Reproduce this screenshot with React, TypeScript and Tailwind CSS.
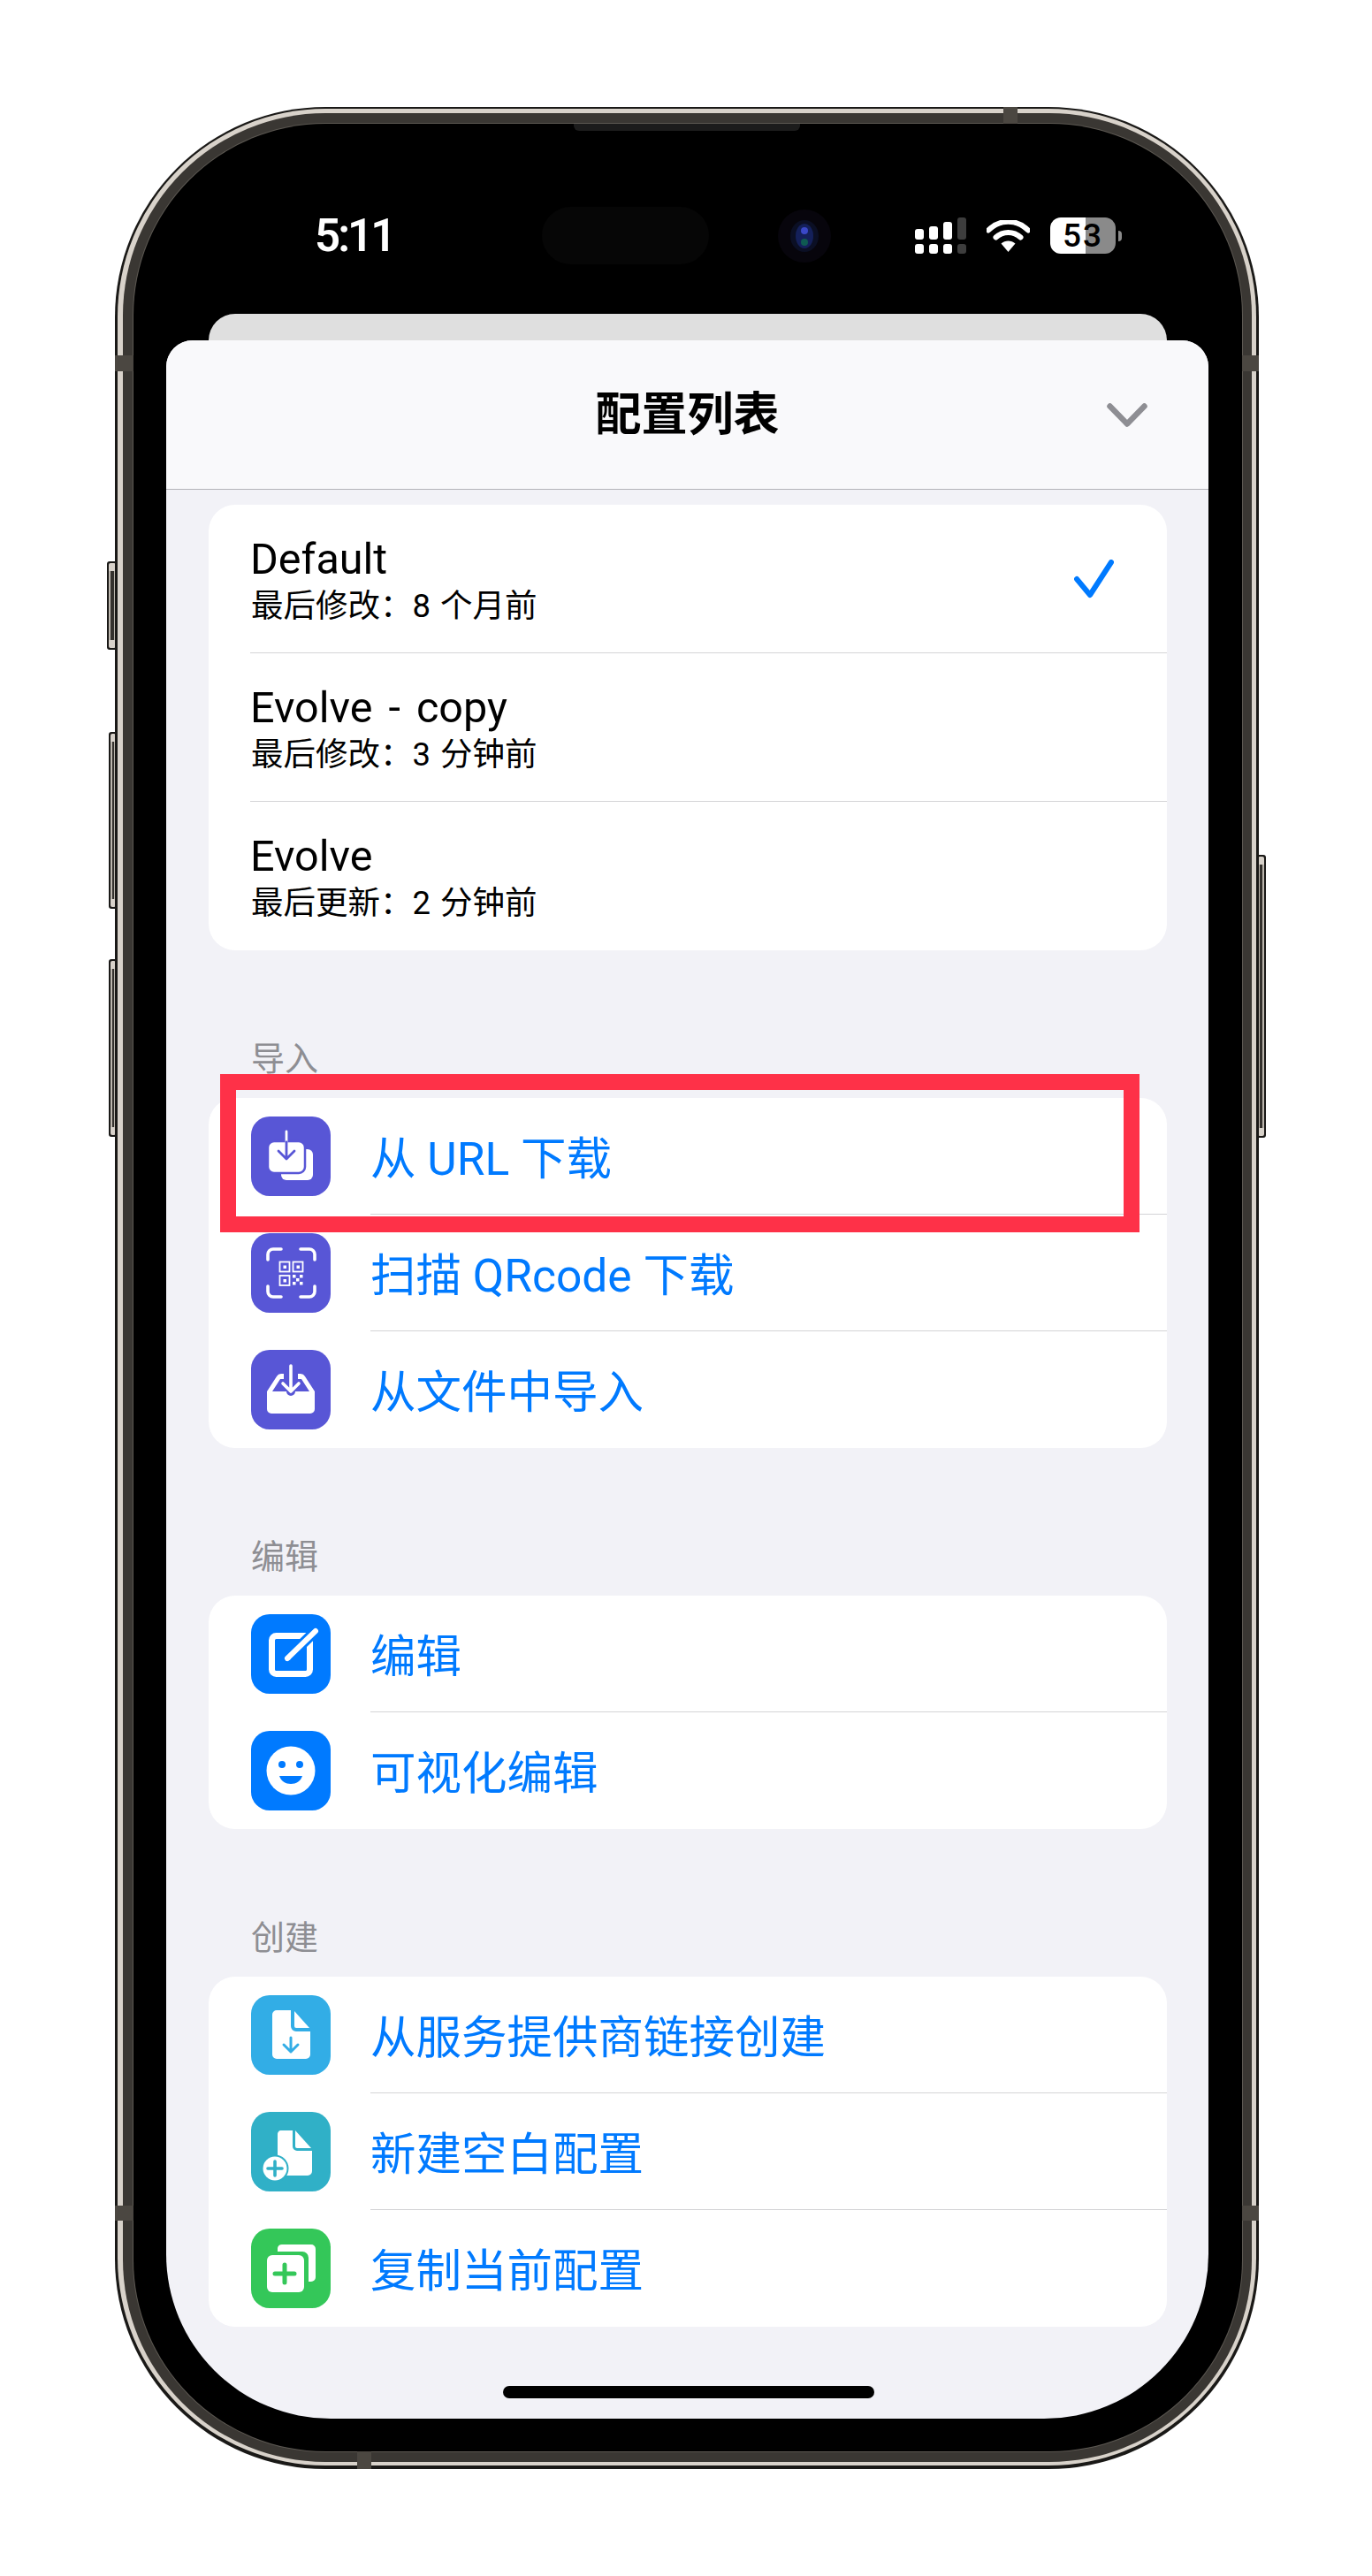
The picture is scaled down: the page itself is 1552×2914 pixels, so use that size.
const Tile = ({ color, children }: { color: string; children: React.ReactNode }) => (
  <div className={`h-[90px] w-[90px] shrink-0 rounded-[21px] ${color}`}>
    <svg viewBox="0 0 90 90" className="h-full w-full">
      {children}
    </svg>
  </div>
);

const UrlIcon = () => (
  <Tile color="bg-[#5856d6]">
    <rect x="34" y="37" width="36" height="35" rx="6" fill="#fff" />
    <rect x="19" y="28" width="42" height="36" rx="7" fill="#fff" stroke="#5856d6" strokeWidth="2.500" />
    <path d="M40 17v12" stroke="#fff" strokeWidth="2.800" strokeLinecap="round" />
    <path d="M40 29v19M31 39l9 9 9-9" stroke="#5856d6" strokeWidth="2.800" fill="none" strokeLinecap="round" strokeLinejoin="round" />
  </Tile>
);

const QrIcon = () => (
  <Tile color="bg-[#5856d6]">
    <path d="M19 30v-6a6 6 0 0 1 6-6h9M56 18h10a6 6 0 0 1 6 6v6M72 60v6a6 6 0 0 1-6 6H56M34 72h-9a6 6 0 0 1-6-6v-6" stroke="#fff" strokeWidth="3.600" fill="none" strokeLinecap="round" />
    <g fill="none" stroke="#fff" strokeWidth="1.800">
      <rect x="32.500" y="32.500" width="11" height="11" />
      <rect x="47.500" y="32.500" width="11" height="11" />
      <rect x="32.500" y="48" width="11" height="11" />
    </g>
    <g fill="#fff">
      <rect x="36.500" y="36.500" width="3.500" height="3.500" />
      <rect x="51.500" y="36.500" width="3.500" height="3.500" />
      <rect x="36.500" y="52" width="3.500" height="3.500" />
      <rect x="47" y="47" width="3.500" height="3.500" />
      <rect x="55" y="47" width="3.500" height="3.500" />
      <rect x="51" y="51" width="3.500" height="3.500" />
      <rect x="47" y="55" width="3.500" height="3.500" />
      <rect x="55" y="55" width="3.500" height="3.500" />
    </g>
  </Tile>
);

const InboxIcon = () => (
  <Tile color="bg-[#5856d6]">
    <path d="M18 47 29 30a6 6 0 0 1 5-3h3v6h-4l-9 14h16a5 5 0 0 0 10 0h16l-9-14h-4v-6h3a6 6 0 0 1 5 3l11 17v20a5 5 0 0 1-5 5H23a5 5 0 0 1-5-5z" fill="#fff" />
    <path d="M45 18v29M36 38l9 9 9-9" stroke="#fff" strokeWidth="3.600" fill="none" strokeLinecap="round" strokeLinejoin="round" />
  </Tile>
);

const EditIcon = () => (
  <Tile color="bg-[#007aff]">
    <rect x="23.500" y="24.500" width="43" height="43" rx="5" fill="none" stroke="#fff" strokeWidth="7" />
    <path d="M40 51 73 19" stroke="#007aff" strokeWidth="12" />
    <path d="M41 50 73 19" stroke="#fff" strokeWidth="6" strokeLinecap="round" />
    <path d="M39 53l1-6 5 4z" fill="#fff" />
  </Tile>
);

const SmileIcon = () => (
  <Tile color="bg-[#007aff]">
    <circle cx="45" cy="45" r="27.500" fill="#fff" />
    <circle cx="35" cy="38" r="4" fill="#007aff" />
    <circle cx="55" cy="38" r="4" fill="#007aff" />
    <path d="M32 51h26c-2 6-7 9-13 9s-11-3-13-9z" fill="#007aff" />
  </Tile>
);

const FileDownIcon = () => (
  <Tile color="bg-[#32ade6]">
    <path d="M29 17h16v18a6 6 0 0 0 6 6h16v26a5 5 0 0 1-5 5H29a5 5 0 0 1-5-5V22a5 5 0 0 1 5-5z" fill="#fff" />
    <path d="M49 18 66 37H51a2 2 0 0 1-2-2z" fill="#fff" />
    <path d="M45 48v16M37 56l8 8 8-8" stroke="#32ade6" strokeWidth="3" fill="none" strokeLinecap="round" strokeLinejoin="round" />
  </Tile>
);

const FilePlusIcon = () => (
  <Tile color="bg-[#30b0c7]">
    <path d="M33 21h14v18a5 5 0 0 0 5 5h17v23a5 5 0 0 1-5 5H30V26a5 5 0 0 1 3-5z" fill="#fff" />
    <path d="M50 21 68 41H52a2 2 0 0 1-2-2z" fill="#fff" />
    <circle cx="27" cy="64" r="15.500" fill="#30b0c7" />
    <circle cx="27" cy="64" r="13.500" fill="#fff" />
    <path d="M27 56v16M19 64h16" stroke="#30b0c7" strokeWidth="3.600" strokeLinecap="round" />
  </Tile>
);

const CopyPlusIcon = () => (
  <Tile color="bg-[#34c759]">
    <path d="M30 22a5 5 0 0 1 5-4h33a5 5 0 0 1 5 5v32a5 5 0 0 1-5 5h-3V33a7 7 0 0 0-7-7H30z" fill="#fff" />
    <rect x="18" y="30" width="42" height="42" rx="6" fill="#fff" />
    <path d="M38 41v20M27 51h22" stroke="#34c759" strokeWidth="5" strokeLinecap="round" />
  </Tile>
);

const profiles = [
  { name: 'Default', sub: '最后修改：8 个月前', checked: true },
  { name: 'Evolve - copy', sub: '最后修改：3 分钟前', checked: false },
  { name: 'Evolve', sub: '最后更新：2 分钟前', checked: false },
];

const sections = [
  {
    title: '导入',
    rows: [
      { label: '从 URL 下载', icon: <UrlIcon /> },
      { label: '扫描 QRcode 下载', icon: <QrIcon /> },
      { label: '从文件中导入', icon: <InboxIcon /> },
    ],
  },
  {
    title: '编辑',
    rows: [
      { label: '编辑', icon: <EditIcon /> },
      { label: '可视化编辑', icon: <SmileIcon /> },
    ],
  },
  {
    title: '创建',
    rows: [
      { label: '从服务提供商链接创建', icon: <FileDownIcon /> },
      { label: '新建空白配置', icon: <FilePlusIcon /> },
      { label: '复制当前配置', icon: <CopyPlusIcon /> },
    ],
  },
];

const StatusBar = () => (
  <div className="flex h-[215px] items-start pt-[94px] pl-[205px]">
    <div className="flex h-[65px] items-center">
      <span className="w-[93px] text-[51px] leading-none font-semibold tracking-[-3px] text-white">5:11</span>
      <div className="ml-[164px] h-[65px] w-[189px] rounded-full bg-[#060606]" />
      <svg viewBox="0 0 60 60" className="ml-[78px] h-[60px] w-[60px]">
        <ellipse cx="30" cy="30" rx="30" ry="30" fill="#07050c" />
        <ellipse cx="30" cy="30" rx="16" ry="18" fill="#0b0f24" />
        <ellipse cx="30" cy="30" rx="10" ry="14" fill="#14205a" />
        <circle cx="30" cy="24" r="4" fill="#3a48c8" />
        <circle cx="30" cy="37" r="4" fill="#0f5a52" />
      </svg>
      <svg viewBox="0 0 58 41" className="ml-[95px] h-[41px] w-[58px]">
        <g fill="#fff">
          <rect x="0" y="13" width="10" height="12" rx="3" />
          <rect x="16" y="10" width="10" height="15" rx="3" />
          <rect x="32" y="5" width="10" height="20" rx="3" />
          <rect x="0" y="30" width="10" height="11" rx="3" />
          <rect x="16" y="30" width="10" height="11" rx="3" />
          <rect x="32" y="30" width="10" height="11" rx="3" />
        </g>
        <g fill="#3d3d3d">
          <rect x="48" y="0" width="10" height="25" rx="3" />
          <rect x="48" y="30" width="10" height="11" rx="3" />
        </g>
      </svg>
      <svg viewBox="0 0 49 36" className="ml-[23px] h-[36px] w-[49px]">
        <path d="M2 11.500C15 -1.500 34 -1.500 47 11.500M10.500 19.500C18.500 12 30.500 12 38.500 19.500" stroke="#fff" strokeWidth="6" fill="none" strokeLinecap="round" />
        <path d="M16.500 26.500c4.500-4 11.500-4 16 0L24.500 36z" fill="#fff" />
      </svg>
      <div className="ml-[23px] flex h-[41px] w-[74px] items-center justify-center rounded-[12px] bg-[linear-gradient(90deg,#fff_54%,#8a8a8a_54%)] text-[37px] leading-none font-medium tracking-[2px] text-black">
        53
      </div>
      <div className="ml-[3px] h-[12px] w-[4px] rounded-r-full bg-[#8a8a8a]" />
    </div>
  </div>
);

const SideKey = ({ className }: { className: string }) => (
  <div className={`absolute flex flex-col rounded-[3px] bg-[#1a1917] p-[2px] ${className}`}>
    <div className="h-[9px] rounded-t-[2px] bg-[#d8d2ca]" />
    <div className="flex-1 border-x-2 border-[#bdb7ae] bg-[#34312d]" />
    <div className="h-[9px] rounded-b-[2px] bg-[#d8d2ca]" />
  </div>
);

export default function App() {
  return (
    <div className="h-[2914px] w-[1552px] bg-white pt-[121px] pl-[130px] font-[Roboto,'Noto_Sans_CJK_SC',sans-serif]">
      <div className="relative h-[2672px] w-[1294px]">
        <SideKey className="top-[514px] left-[-9px] h-[100px] w-[12px]" />
        <SideKey className="top-[707px] left-[-7px] h-[200px] w-[10px]" />
        <SideKey className="top-[964px] left-[-7px] h-[201px] w-[10px]" />
        <SideKey className="top-[846px] right-[-8px] h-[320px] w-[11px]" />

        <div className="relative h-full rounded-[238px] bg-[#1a1917] pt-[2px] pr-[3px] pb-[4px] pl-[3px]">
          <div className="h-full rounded-[235px] bg-[#d8d2ca] pt-[5px] pr-[5px] pb-[4px] pl-[6px]">
            <div className="h-full rounded-[229px] bg-[#3a3733] pt-[12px] pr-[11px] pb-[12px] pl-[12px]">
              <div className="relative h-full rounded-[217px] bg-black pb-[37px] shadow-[0_0_0_1px_#5c5852]">
                <div className="absolute top-0 left-[498px] h-[8px] w-[256px] rounded-b-[6px] bg-[#1c1c1c]" />
                <StatusBar />

                <div className="mx-[85px] h-[30px] rounded-t-[30px] bg-[#dfdfdf]" />

                <div className="relative mr-[38px] ml-[37px] h-[2351px] overflow-hidden rounded-t-[30px] rounded-b-[186px] bg-[#f2f2f7]">
                  <div className="grid h-[169px] grid-cols-[1fr_auto_1fr] items-center border-b border-[#b4b4b9] bg-[#f9f9fb]">
                    <div />
                    <div className="pt-[2px] text-[52px] font-bold text-black">配置列表</div>
                    <svg viewBox="0 0 46 27" className="mr-[69px] h-[27px] w-[46px] justify-self-end">
                      <path d="M3.500 3.500 23 23.500 42.500 3.500" stroke="#8e8e93" strokeWidth="6.500" fill="none" strokeLinecap="round" strokeLinejoin="round" />
                    </svg>
                  </div>

                  <div className="pt-[17px] pr-[47px] pl-[48px]">
                    <div className="rounded-[30px] bg-white pl-[47px]">
                      {profiles.map((p, i) => (
                        <div
                          key={p.name}
                          className={`flex h-[168px] items-center justify-between ${i < 2 ? 'border-b border-[#d4d4d6]' : ''}`}
                        >
                          <div>
                            <div className="pt-[1px] text-[48.500px] leading-[58px] text-black [word-spacing:6px]">{p.name}</div>
                            <div className="mt-[3px] pl-[1px] text-[36.500px] leading-[42px] text-black [word-spacing:2px]">{p.sub}</div>
                          </div>
                          {p.checked && (
                            <svg viewBox="0 0 45 44" className="mr-[60px] h-[44px] w-[45px]">
                              <path d="M3 22 18 40 42 3" stroke="#007aff" strokeWidth="6" fill="none" strokeLinecap="round" strokeLinejoin="round" />
                            </svg>
                          )}
                        </div>
                      ))}
                    </div>

                    {sections.map((section) => (
                      <div key={section.title} className="mt-[98px]">
                        <div className="mb-[19px] pl-[48px] text-[38px] leading-[50px] text-[#8e8e93]">{section.title}</div>
                        <div className="rounded-[30px] bg-white">
                          {section.rows.map((row, i) => (
                            <div key={row.label} className="flex h-[132px] items-center pl-[48px]">
                              {row.icon}
                              <div
                                className={`ml-[45px] flex h-full flex-1 items-center pt-[8px] text-[51.500px] text-[#007aff] ${
                                  i < section.rows.length - 1 ? 'border-b border-[#d4d4d6]' : ''
                                }`}
                              >
                                {row.label}
                              </div>
                            </div>
                          ))}
                        </div>
                      </div>
                    ))}
                  </div>

                  <div className="absolute bottom-[23px] left-[381px] h-[14px] w-[420px] rounded-full bg-black" />
                </div>
              </div>
            </div>
          </div>
        </div>

        <div className="absolute top-0 left-[1005px] h-[19px] w-[16px] bg-[#4b4741]" />
        <div className="absolute top-[281px] left-0 h-[18px] w-[21px] bg-[#4b4741]" />
        <div className="absolute top-[281px] right-0 h-[18px] w-[19px] bg-[#4b4741]" />
        <div className="absolute top-[2374px] left-0 h-[17px] w-[21px] bg-[#4b4741]" />
        <div className="absolute top-[2374px] right-0 h-[17px] w-[19px] bg-[#4b4741]" />
        <div className="absolute bottom-0 left-[274px] h-[20px] w-[16px] bg-[#4b4741]" />

        <div className="absolute top-[1094px] left-[119px] h-[179px] w-[1040px] border-[18px] border-[#fe3148]" />
      </div>
    </div>
  );
}
